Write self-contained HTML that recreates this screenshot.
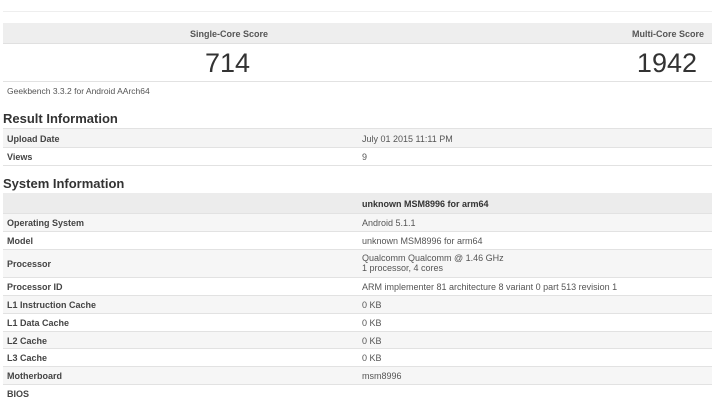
<!DOCTYPE html>
<html><head><style>
body{margin:0;width:712px;height:400px;background:#fff;font-family:"Liberation Sans",Arial,sans-serif;color:#333;position:relative;overflow:hidden}
.a{position:absolute;white-space:nowrap}
.row{position:absolute;left:3px;width:709px;border-bottom:1px solid #e2e2e2;font-size:9px}
.row .k{position:absolute;left:4px;font-weight:bold;color:#444}
.row .v{position:absolute;left:359px;color:#555}
h2{position:absolute;margin:0;font-size:13px;font-weight:bold;color:#333}
</style></head><body>
<div class="a" style="left:3px;top:11px;width:709px;border-top:1px solid #eee"></div>
<div class="a" style="left:3px;top:23px;width:709px;height:20px;background:#eeeeee;border-bottom:1px solid #e0e0e0"></div>
<div class="a" style="left:190px;top:29px;font-size:9px;font-weight:bold;color:#555">Single-Core Score</div>
<div class="a" style="right:8px;top:29px;font-size:9px;font-weight:bold;color:#555">Multi-Core Score</div>
<div class="a" style="left:205px;top:48px;font-size:27px;color:#333">714</div>
<div class="a" style="right:15px;top:48px;font-size:27px;color:#333">1942</div>
<div class="a" style="left:3px;top:81px;width:709px;border-top:1px solid #e2e2e2"></div>
<div class="a" style="left:7px;top:86px;font-size:8.5px;color:#555">Geekbench 3.3.2 for Android AArch64</div>
<h2 style="left:3px;top:111px">Result Information</h2>
<div class="row" style="top:128px;height:18px;background:#f4f4f4;border-top:1px solid #e2e2e2"><span class="k" style="top:5px">Upload Date</span><span class="v" style="top:5px">July 01 2015 11:11 PM</span></div>
<div class="row" style="top:147px;height:18px"><span class="k" style="top:5px">Views</span><span class="v" style="top:5px">9</span></div>
<h2 style="left:3px;top:176px">System Information</h2>
<div class="row" style="top:193px;height:20px;background:#ececec"><span class="v" style="top:6px;font-weight:bold;color:#333">unknown MSM8996 for arm64</span></div>
<div class="row" style="top:214px;height:17px;background:#f6f6f6"><span class="k" style="top:4px">Operating System</span><span class="v" style="top:4px">Android 5.1.1</span></div>
<div class="row" style="top:232px;height:17px"><span class="k" style="top:4px">Model</span><span class="v" style="top:4px">unknown MSM8996 for arm64</span></div>
<div class="row" style="top:250px;height:27px;background:#f6f6f6"><span class="k" style="top:9px">Processor</span><span class="v" style="top:3px;line-height:10px">Qualcomm Qualcomm @ 1.46 GHz<br>1 processor, 4 cores</span></div>
<div class="row" style="top:278px;height:17px"><span class="k" style="top:4px">Processor ID</span><span class="v" style="top:4px">ARM implementer 81 architecture 8 variant 0 part 513 revision 1</span></div>
<div class="row" style="top:296px;height:17px;background:#f6f6f6"><span class="k" style="top:4px">L1 Instruction Cache</span><span class="v" style="top:4px">0 KB</span></div>
<div class="row" style="top:314px;height:17px"><span class="k" style="top:4px">L1 Data Cache</span><span class="v" style="top:4px">0 KB</span></div>
<div class="row" style="top:332px;height:16px;background:#f6f6f6"><span class="k" style="top:4px">L2 Cache</span><span class="v" style="top:4px">0 KB</span></div>
<div class="row" style="top:349px;height:17px"><span class="k" style="top:4px">L3 Cache</span><span class="v" style="top:4px">0 KB</span></div>
<div class="row" style="top:367px;height:17px;background:#f6f6f6"><span class="k" style="top:4px">Motherboard</span><span class="v" style="top:4px">msm8996</span></div>
<div class="row" style="top:385px;height:17px;border:none"><span class="k" style="top:4px">BIOS</span></div>
</body></html>
